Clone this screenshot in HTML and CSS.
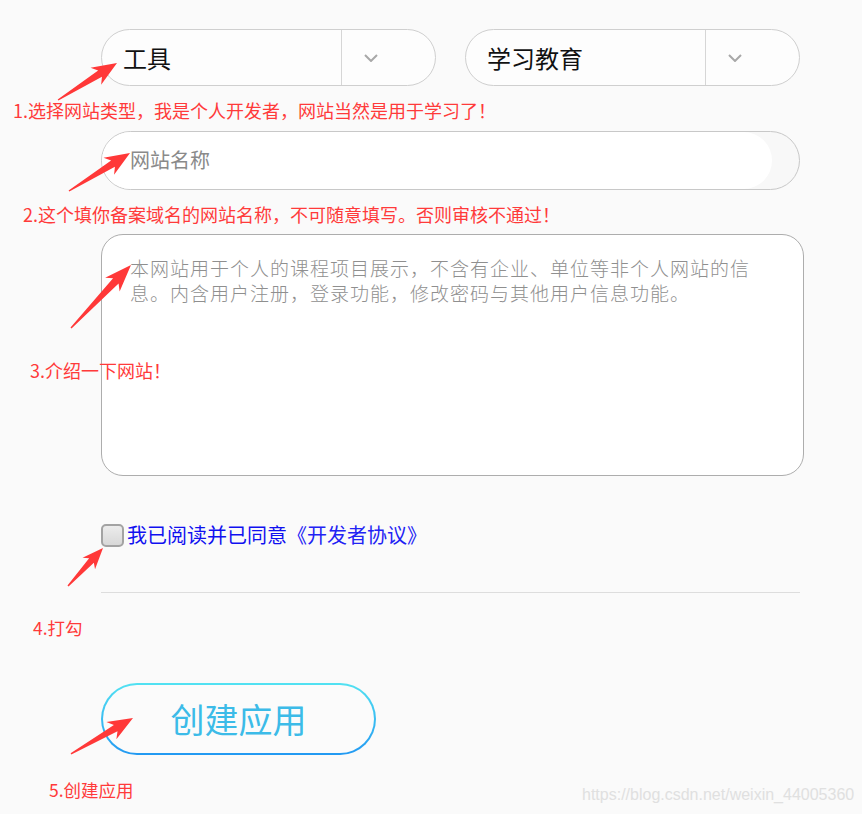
FILE: index.html
```html
<!DOCTYPE html>
<html lang="zh-CN">
<head>
<meta charset="utf-8">
<title>创建应用</title>
<link rel="stylesheet" href="styles.css">
</head>
<body>
<div class="page">
  <main class="form">
    <div class="select-row">
      <div class="select">
        <div class="select-value">工具</div>
        <div class="select-arrow">
          <svg width="14" height="8" viewBox="0 0 14 8"><polyline points="1,1 7,7 13,1" fill="none" stroke="#a8a8a8" stroke-width="2"/></svg>
        </div>
      </div>
      <div class="select">
        <div class="select-value">学习教育</div>
        <div class="select-arrow">
          <svg width="14" height="8" viewBox="0 0 14 8"><polyline points="1,1 7,7 13,1" fill="none" stroke="#a8a8a8" stroke-width="2"/></svg>
        </div>
      </div>
    </div>

    <div class="name-field">
      <div class="name-inner">网站名称</div>
    </div>

    <div class="desc-field">
      <p class="desc-text">本网站用于个人的课程项目展示，不含有企业、单位等非个人网站的信息。内含用户注册，登录功能，修改密码与其他用户信息功能。</p>
    </div>

    <label class="agree">
      <span class="checkbox"></span>
      <span class="agree-text">我已阅读并已同意<span class="agree-link">《开发者协议》</span></span>
    </label>

    <div class="divider"></div>

    <div class="button-row">
      <div class="create-btn">创建应用</div>
    </div>
  </main>

  <div class="note note1">1.选择网站类型，我是个人开发者，网站当然是用于学习了！</div>
  <div class="note note2">2.这个填你备案域名的网站名称，不可随意填写。否则审核不通过！</div>
  <div class="note note3">3.介绍一下网站！</div>
  <div class="note note4">4.打勾</div>
  <div class="note note5">5.创建应用</div>
  <div class="watermark">https://blog.csdn.net/weixin_44005360</div>

  <svg class="arrows" width="862" height="814" viewBox="0 0 862 814">
    <g fill="#ff3838">
      <g transform="translate(117 63) rotate(-32.1)">
        <polygon points="0,0 -25,-10 -20,-3.6 -69.6,-0.7 -69.6,0.7 -20,3.6 -25,10"/>
      </g>
      <g transform="translate(130 153) rotate(-31.9)">
        <polygon points="0,0 -25,-10 -20,-3.6 -71.9,-0.7 -71.9,0.7 -20,3.6 -25,10"/>
      </g>
      <g transform="translate(131 265) rotate(-46.4)">
        <polygon points="0,0 -27,-10 -22,-3.8 -87,-0.7 -87,0.7 -22,3.8 -27,10"/>
      </g>
      <g transform="translate(103 548) rotate(-47.4)">
        <polygon points="0,0 -21,-8.5 -17,-3.2 -51.7,-0.7 -51.7,0.7 -17,3.2 -21,8.5"/>
      </g>
      <g transform="translate(133 718) rotate(-30.1)">
        <polygon points="0,0 -25,-10 -20,-3.6 -71.7,-0.7 -71.7,0.7 -20,3.6 -25,10"/>
      </g>
    </g>
  </svg>
</div>
</body>
</html>
```

FILE: styles.css
```css
* {
  box-sizing: border-box;
}

html, body {
  margin: 0;
  padding: 0;
  background: #fafafa;
}

body {
  font-family: "Noto Sans CJK SC", "Noto Sans", sans-serif;
}

.page {
  position: relative;
  width: 862px;
  height: 814px;
  overflow: hidden;
}

.form {
  padding: 29px 0 0 101px;
  display: flex;
  flex-direction: column;
  align-items: flex-start;
}

.select-row {
  display: flex;
  gap: 29px;
}

.select {
  width: 335px;
  height: 57px;
  border: 1px solid #cfcfcf;
  border-radius: 29px;
  background: #fdfdfd;
  display: flex;
}

.select-value {
  width: 239px;
  padding-left: 21px;
  font-size: 24px;
  line-height: 55px;
  color: #111;
}

.select-arrow {
  flex: 1;
  border-left: 1px solid #d6d6d6;
  display: flex;
  align-items: center;
  padding-left: 22px;
}

.name-field {
  margin-top: 45px;
  width: 699px;
  height: 59px;
  border: 1px solid #c8c8c8;
  border-radius: 30px;
  background: #f8f8f8;
  overflow: hidden;
}

.name-inner {
  width: 670px;
  height: 100%;
  background: #ffffff;
  border-radius: 0 30px 30px 0;
  padding-left: 28px;
  font-size: 20px;
  line-height: 56px;
  color: #8a8a8a;
}

.desc-field {
  margin-top: 44px;
  width: 703px;
  height: 242px;
  border: 1px solid #adadad;
  border-radius: 22px;
  background: #ffffff;
  padding: 20px 0 0 28px;
}

.desc-text {
  margin: 0;
  width: 632px;
  font-size: 19px;
  letter-spacing: 1px;
  line-height: 25px;
  color: #8f8f8f;
  font-weight: 300;
}

.agree {
  margin-top: 47px;
  display: flex;
  align-items: center;
  height: 24px;
}

.checkbox {
  width: 23px;
  height: 23px;
  border: 2px solid #a3a3a3;
  border-radius: 5px;
  background: linear-gradient(#ececec, #d8d8d8);
}

.agree-text {
  margin-left: 3px;
  font-size: 20px;
  line-height: 24px;
  color: #1010f0;
}

.agree-link {
  color: #2222f4;
}

.divider {
  margin-top: 45px;
  width: 699px;
  height: 1px;
  background: #dddddd;
}

.button-row {
  margin-top: 90px;
}

.create-btn {
  width: 275px;
  height: 72px;
  border: 2px solid transparent;
  border-radius: 36px;
  background:
    linear-gradient(#fbfbfb, #fbfbfb) padding-box,
    linear-gradient(#52e2f2, #2299f2) border-box;
  display: flex;
  align-items: center;
  justify-content: center;
  font-size: 34px;
  color: #3cbbe8;
  line-height: 1;
}

.note {
  position: absolute;
  color: #ff3a3a;
  font-size: 18px;
  line-height: 1;
  white-space: nowrap;
}

.note1 { left: 13px; top: 101px; }
.note2 { left: 23px; top: 205px; }
.note3 { left: 30px; top: 361px; }
.note4 { left: 33px; top: 619px; font-size: 17.5px; }
.note5 { left: 49px; top: 781px; font-size: 17.5px; }

.watermark {
  position: absolute;
  left: 582px;
  top: 786px;
  font-family: "Liberation Sans", Arial, sans-serif;
  font-size: 16px;
  line-height: 18px;
  color: #e0e0e0;
  white-space: nowrap;
}

.arrows {
  position: absolute;
  left: 0;
  top: 0;
  pointer-events: none;
}
```
